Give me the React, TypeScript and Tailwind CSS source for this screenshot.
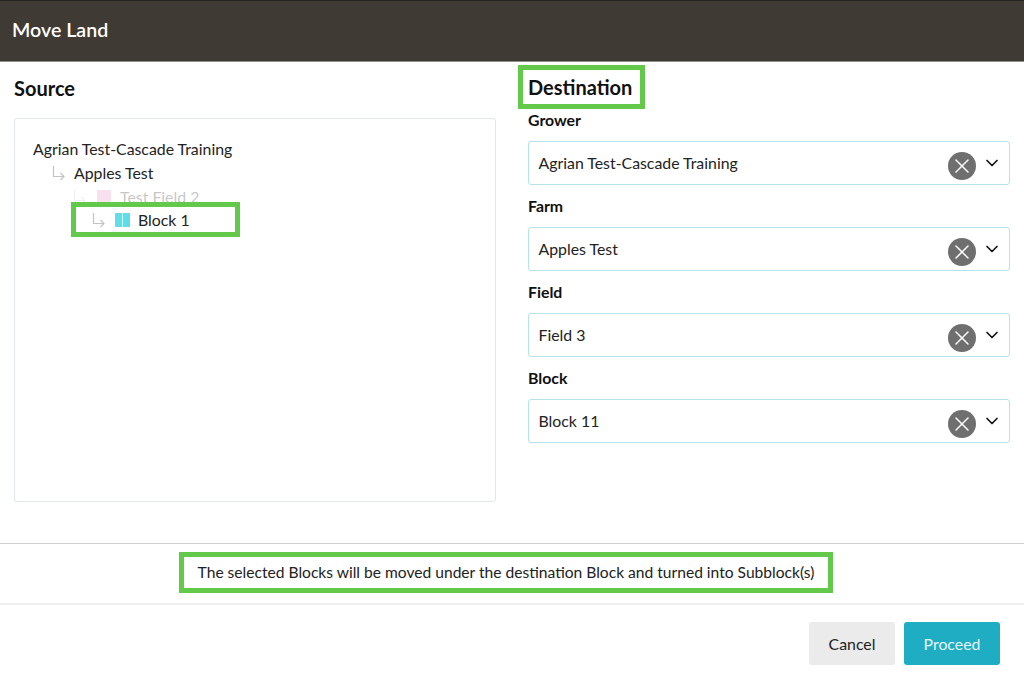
import { ChevronDown, X } from 'lucide-react'

const fields = [
  { label: 'Grower', value: 'Agrian Test-Cascade Training' },
  { label: 'Farm', value: 'Apples Test' },
  { label: 'Field', value: 'Field 3' },
  { label: 'Block', value: 'Block 11' },
]

function TreeArrow({ className }: { className?: string }) {
  return (
    <svg width="14" height="16" viewBox="0 0 14 16" fill="none" stroke="#c4c4c4" strokeWidth="1.2" className={className}>
      <path d="M1.5 1v10.5h10.5M8.5 8l3.5 3.5L8.5 15" />
    </svg>
  )
}

export default function App() {
  return (
    <div className="w-[1024px] h-[681px] overflow-hidden bg-white text-[#222] font-['Lato',sans-serif]">
      {/* Header */}
      <div className="h-[62px] flex items-center px-3 pb-[3px] bg-[#3f3b34] border-t border-t-[#222] border-b border-b-[#8d8d8d]">
        <h1 className="text-[19.6px] font-semibold text-white">Move Land</h1>
      </div>

      <div className="h-[481px] flex pl-[14px] pr-[14px]">
        {/* Source */}
        <div className="w-[482px] pt-[13px]">
          <h2 className="text-[20px] leading-[26px] font-bold text-[#111]">Source</h2>
          <div className="relative mt-[17px] h-[384px] border border-[#dfe6ee] rounded-[3px] pt-[18px] pl-[18px] text-[15.85px] leading-[24px]">
            <div>Agrian Test-Cascade Training</div>
            <div className="flex items-center pl-[19px] gap-[8px]">
              <TreeArrow />
              <span>Apples Test</span>
            </div>
            <div className="flex items-center pl-[40px] opacity-25">
              <TreeArrow />
              <span className="w-[14px] h-[14px] ml-[10px] bg-[#e58abf]" />
              <span className="ml-[9px]">Test Field 2</span>
            </div>
            {/* highlighted row lies over the row above */}
            <div className="absolute left-[56px] top-[83px] w-[169px] h-[35px] border-[5px] border-[#62c94a] bg-white flex items-center pl-[16px] pt-px">
              <TreeArrow />
              <span className="w-[15px] h-[14px] ml-[9px] bg-[#5fdde8] flex justify-center">
                <span className="w-px h-full bg-white/70" />
              </span>
              <span className="ml-[8px]">Block 1</span>
            </div>
          </div>
        </div>

        {/* Destination */}
        <div className="w-[482px] ml-[32px] pt-[3px]">
          <h2 className="inline-block -ml-[10px] h-[44px] border-[5px] border-[#62c94a] pl-[5px] pr-[8px] text-[20px] leading-[34px] font-bold text-[#111]">
            Destination
          </h2>
          <div className="flex flex-col gap-[9px] -mt-px">
            {fields.map(f => (
              <div key={f.label}>
                <div className="text-[15.85px] leading-[24px] font-bold text-[#111] mb-[9px]">{f.label}</div>
                <div className="h-[44px] border border-[#b4e3ea] rounded-[3px] flex items-center pl-[9.5px] pr-[7px] text-[15.85px]">
                  <span className="flex-1">{f.value}</span>
                  <span className="w-[28px] h-[28px] mt-[5px] rounded-full bg-[#6f6f6f] flex items-center justify-center">
                    <X size={24} color="#fff" strokeWidth={1.5} />
                  </span>
                  <ChevronDown size={20} color="#111" strokeWidth={2} className="ml-[6px]" />
                </div>
              </div>
            ))}
          </div>
        </div>
      </div>

      {/* Message */}
      <div className="h-[62px] border-t border-t-[#d2d2d2] border-b-2 border-b-[#eeeef3] flex items-center justify-center">
        <div className="w-[654px] h-[41px] mr-[12px] -mt-[3px] pt-px border-[5px] border-[#62c94a] flex items-center justify-center text-[15.6px]">
          The selected Blocks will be moved under the destination Block and turned into Subblock(s)
        </div>
      </div>

      {/* Footer */}
      <div className="flex justify-end gap-[9px] pt-[17px] pr-[24px]">
        <button className="w-[86px] h-[43px] rounded-[3px] bg-[#ebebeb] text-[15.85px] text-[#222]">Cancel</button>
        <button className="w-[96px] h-[43px] rounded-[3px] bg-[#1fadc3] text-[15.85px] text-[#e6f6f9]">Proceed</button>
      </div>
    </div>
  )
}
